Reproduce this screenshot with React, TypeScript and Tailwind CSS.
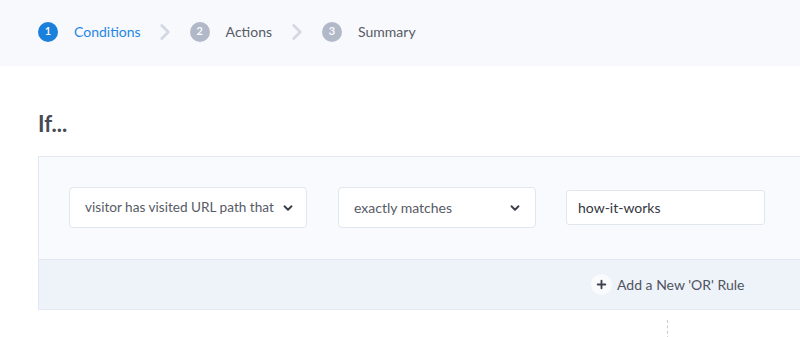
import React from "react";
import { ChevronDown, ChevronRight, Plus } from "lucide-react";

function Step({ n, label, active }: { n: number; label: string; active?: boolean }) {
  return (
    <div className="flex items-center">
      <div
        className={
          "w-[20px] h-[20px] rounded-full flex items-center justify-center text-white text-[11px] font-semibold " +
          (active ? "bg-[#1b7fdc]" : "bg-[#b1b9c8]")
        }
      >
        {n}
      </div>
      <span className={"ml-[16px] text-[14px] whitespace-nowrap " + (active ? "text-[#2487e4]" : "text-[#565b66]")}>{label}</span>
    </div>
  );
}

export default function App() {
  return (
    <div className="w-[800px] h-[337px] overflow-hidden bg-white" style={{ fontFamily: "Lato, 'Open Sans', sans-serif" }}>
      <div className="h-[66px] bg-[#f8f9fc] flex items-center pl-[38px] pb-[3px]">
        <Step n={1} label="Conditions" active />
        <ChevronRight className="ml-[11px] mr-[12px] text-[#d3d9e2]" size={26} strokeWidth={2.6} />
        <Step n={2} label="Actions" />
        <ChevronRight className="ml-[12px] mr-[12px] text-[#d3d9e2]" size={26} strokeWidth={2.6} />
        <Step n={3} label="Summary" />
      </div>
      <div className="pl-[38px]">
        <h1 className="mt-[44px] text-[22px] leading-[28px] font-bold text-[#454a56]">If...</h1>
        <div className="mt-[18px] w-[820px] border border-r-0 border-[#e2e8f1]">
          <div className="h-[102px] bg-[#f9fafd] flex items-center pl-[30px] pb-[1px]">
            <div className="w-[238px] h-[41px] bg-white border border-[#e1e7ef] rounded-[4px] flex items-center gap-[7px] pl-[15px] pr-[12px]">
              <span className="text-[13.6px] whitespace-nowrap text-[#575b66]">visitor has visited URL path that</span>
              <ChevronDown size={14} strokeWidth={3.2} className="text-[#3a3e48] shrink-0" />
            </div>
            <div className="ml-[31px] w-[198px] h-[41px] bg-white border border-[#e1e7ef] rounded-[4px] flex items-center justify-between pl-[15px] pr-[13px]">
              <span className="text-[14px] whitespace-nowrap text-[#575b66]">exactly matches</span>
              <ChevronDown size={14} strokeWidth={3.2} className="text-[#3a3e48] shrink-0" />
            </div>
            <div className="ml-[30px] w-[199px] h-[35px] bg-white border border-[#e1e7ef] rounded-[3px] flex items-center pl-[11px]">
              <span className="text-[14px] whitespace-nowrap text-[#333740]">how-it-works</span>
            </div>
          </div>
          <div className="h-[50px] border-t border-[#e2e8f1] bg-[#eef2f9] flex items-center pl-[552px]">
            <div className="w-[21px] h-[21px] rounded-full bg-[#fafbfd] flex items-center justify-center">
              <Plus size={13} strokeWidth={3.5} className="text-[#3f434d]" />
            </div>
            <span className="ml-[5px] text-[14px] whitespace-nowrap text-[#4f5460]">Add a New 'OR' Rule</span>
          </div>
        </div>
        <div className="ml-[629px] mt-[10px] h-[30px] border-l border-dashed border-[#c5cad3]" />
      </div>
    </div>
  );
}
